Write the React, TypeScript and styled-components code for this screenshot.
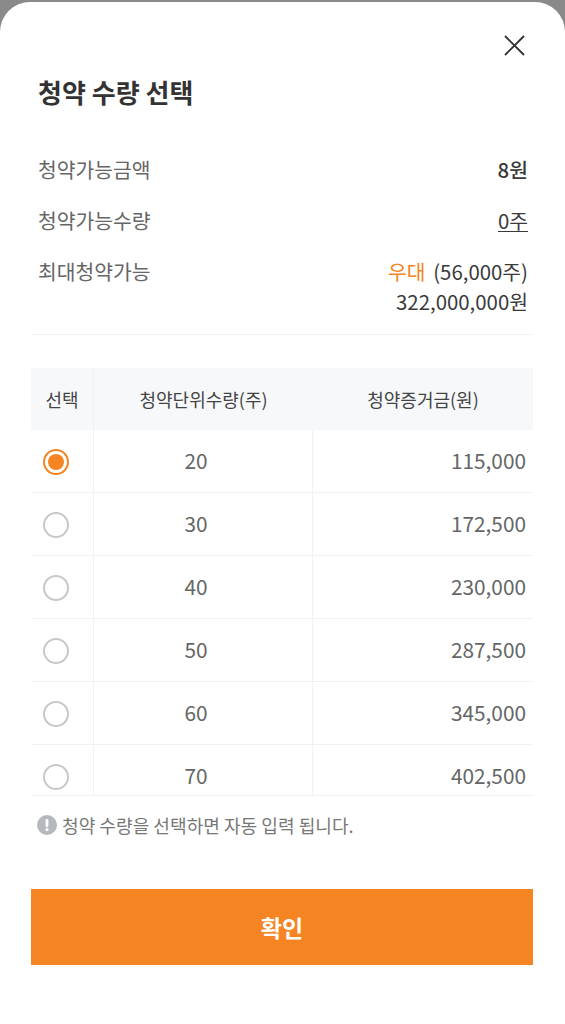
import { Fragment } from 'react'
import styled, { createGlobalStyle } from 'styled-components'

const rows = [
  { qty: 20, amount: '115,000', selected: true },
  { qty: 30, amount: '172,500' },
  { qty: 40, amount: '230,000' },
  { qty: 50, amount: '287,500' },
  { qty: 60, amount: '345,000' },
  { qty: 70, amount: '402,500' },
]

const GlobalStyle = createGlobalStyle`
  html, body {
    margin: 0;
    padding: 0;
    height: 100%;
    background: #8a8a8a;
    font-family: "Noto Sans CJK KR", "Noto Sans", sans-serif;
    overflow: hidden;
  }
`

const Sheet = styled.div`
  box-sizing: border-box;
  margin-top: 2px;
  height: 1022px;
  background: #fff;
  border-radius: 30px 30px 0 0;
  padding: 0 32px 0 31px;
  overflow: hidden;
`

const CloseRow = styled.div`
  display: flex;
  justify-content: flex-end;
  padding: 33px 8px 0 0;
  height: 21px;

  svg {
    display: block;
  }
`

const Title = styled.h2`
  margin: 17px 0 0 7px;
  font-size: 26px;
  line-height: 38px;
  font-weight: 700;
  color: #333;
`

const Info = styled.div`
  margin-top: 43px;
  padding: 0 5px 18px 7px;
  border-bottom: 1px solid #f2f2f2;
`

const InfoRow = styled.div`
  display: flex;
  justify-content: space-between;
  align-items: flex-start;
  margin-bottom: 21px;
  font-size: 20.4px;
  line-height: 30px;

  &:last-child {
    margin-bottom: 0;
  }
`

const Label = styled.span`
  color: #666;
`

const Value = styled.span<{ $bold?: boolean; $link?: boolean }>`
  color: #3a3a3a;
  text-align: right;
  font-weight: ${({ $bold }) => ($bold ? 500 : 400)};
  text-decoration: ${({ $link }) => ($link ? 'underline' : 'none')};
  text-underline-offset: 2px;
  text-decoration-thickness: 1px;
`

const Accent = styled.span`
  color: #f58422;
  margin-right: 3px;
`

const TableWrap = styled.div`
  margin-top: 33px;
  height: 427px;
  overflow: hidden;
  border-bottom: 1px solid #f0f0f0;
`

const Table = styled.div`
  display: grid;
  grid-template-columns: 63px 219px 220px;
`

const Head = styled.div<{ $plain?: boolean }>`
  height: 62px;
  display: flex;
  align-items: center;
  justify-content: center;
  background: #f7f8fa;
  color: #444;
  font-size: 18px;
  border-right: ${({ $plain }) => ($plain ? 'none' : '1px solid #f1f2f4')};
`

const Cell = styled.div<{ $end?: boolean; $last?: boolean; $shift?: number }>`
  box-sizing: border-box;
  height: 63px;
  display: flex;
  align-items: center;
  justify-content: ${({ $end }) => ($end ? 'flex-end' : 'center')};
  padding-right: ${({ $end, $shift }) => ($end ? '7px' : `${$shift ?? 0}px`)};
  padding-bottom: 2px;
  color: #666;
  font-size: 20.8px;
  border-bottom: 1px solid #f2f2f2;
  border-right: ${({ $last }) => ($last ? 'none' : '1px solid #f2f2f2')};
`

const Radio = styled.span<{ $on?: boolean }>`
  box-sizing: border-box;
  width: 26px;
  height: 26px;
  margin-top: 4px;
  border-radius: 50%;
  background: #fff;
  border: 2px solid ${({ $on }) => ($on ? '#f58422' : '#c8c8c8')};
  display: flex;
  align-items: center;
  justify-content: center;

  &::after {
    content: '';
    display: ${({ $on }) => ($on ? 'block' : 'none')};
    width: 16px;
    height: 16px;
    border-radius: 50%;
    background: #f58422;
  }
`

const Notice = styled.div`
  display: flex;
  align-items: center;
  gap: 5px;
  margin: 16px 0 0 6px;
  color: #777;
  font-size: 18.1px;
  line-height: 26px;
`

const ConfirmButton = styled.button`
  display: block;
  width: 100%;
  height: 76px;
  margin-top: 51px;
  border: 0;
  padding: 0;
  background: #f58422;
  color: #fff;
  font-family: inherit;
  font-size: 23px;
  font-weight: 700;
`

export default function App() {
  return (
    <>
      <GlobalStyle />
      <Sheet>
        <CloseRow>
          <svg width="21" height="21" viewBox="0 0 21 21" fill="none" stroke="#333" strokeWidth="1.9">
            <path d="M1 1l19 19M20 1L1 20" />
          </svg>
        </CloseRow>
        <Title>청약 수량 선택</Title>
        <Info>
          <InfoRow>
            <Label>청약가능금액</Label>
            <Value $bold>8원</Value>
          </InfoRow>
          <InfoRow>
            <Label>청약가능수량</Label>
            <Value $link>0주</Value>
          </InfoRow>
          <InfoRow>
            <Label>최대청약가능</Label>
            <Value>
              <Accent>우대</Accent> (56,000주)
              <br />
              322,000,000원
            </Value>
          </InfoRow>
        </Info>
        <TableWrap>
          <Table>
            <Head>선택</Head>
            <Head $plain>청약단위수량(주)</Head>
            <Head $plain>청약증거금(원)</Head>
            {rows.map((row) => (
              <Fragment key={row.qty}>
                <Cell $shift={13}>
                  <Radio $on={row.selected} />
                </Cell>
                <Cell $shift={14}>{row.qty}</Cell>
                <Cell $end $last>
                  {row.amount}
                </Cell>
              </Fragment>
            ))}
          </Table>
        </TableWrap>
        <Notice>
          <svg width="20" height="20" viewBox="0 0 20 20">
            <circle cx="10" cy="10" r="10" fill="#b5b8bc" />
            <rect x="8.6" y="4" width="2.8" height="8" rx="1.2" fill="#fff" />
            <circle cx="10" cy="14.6" r="1.6" fill="#fff" />
          </svg>
          청약 수량을 선택하면 자동 입력 됩니다.
        </Notice>
        <ConfirmButton>확인</ConfirmButton>
      </Sheet>
    </>
  )
}
